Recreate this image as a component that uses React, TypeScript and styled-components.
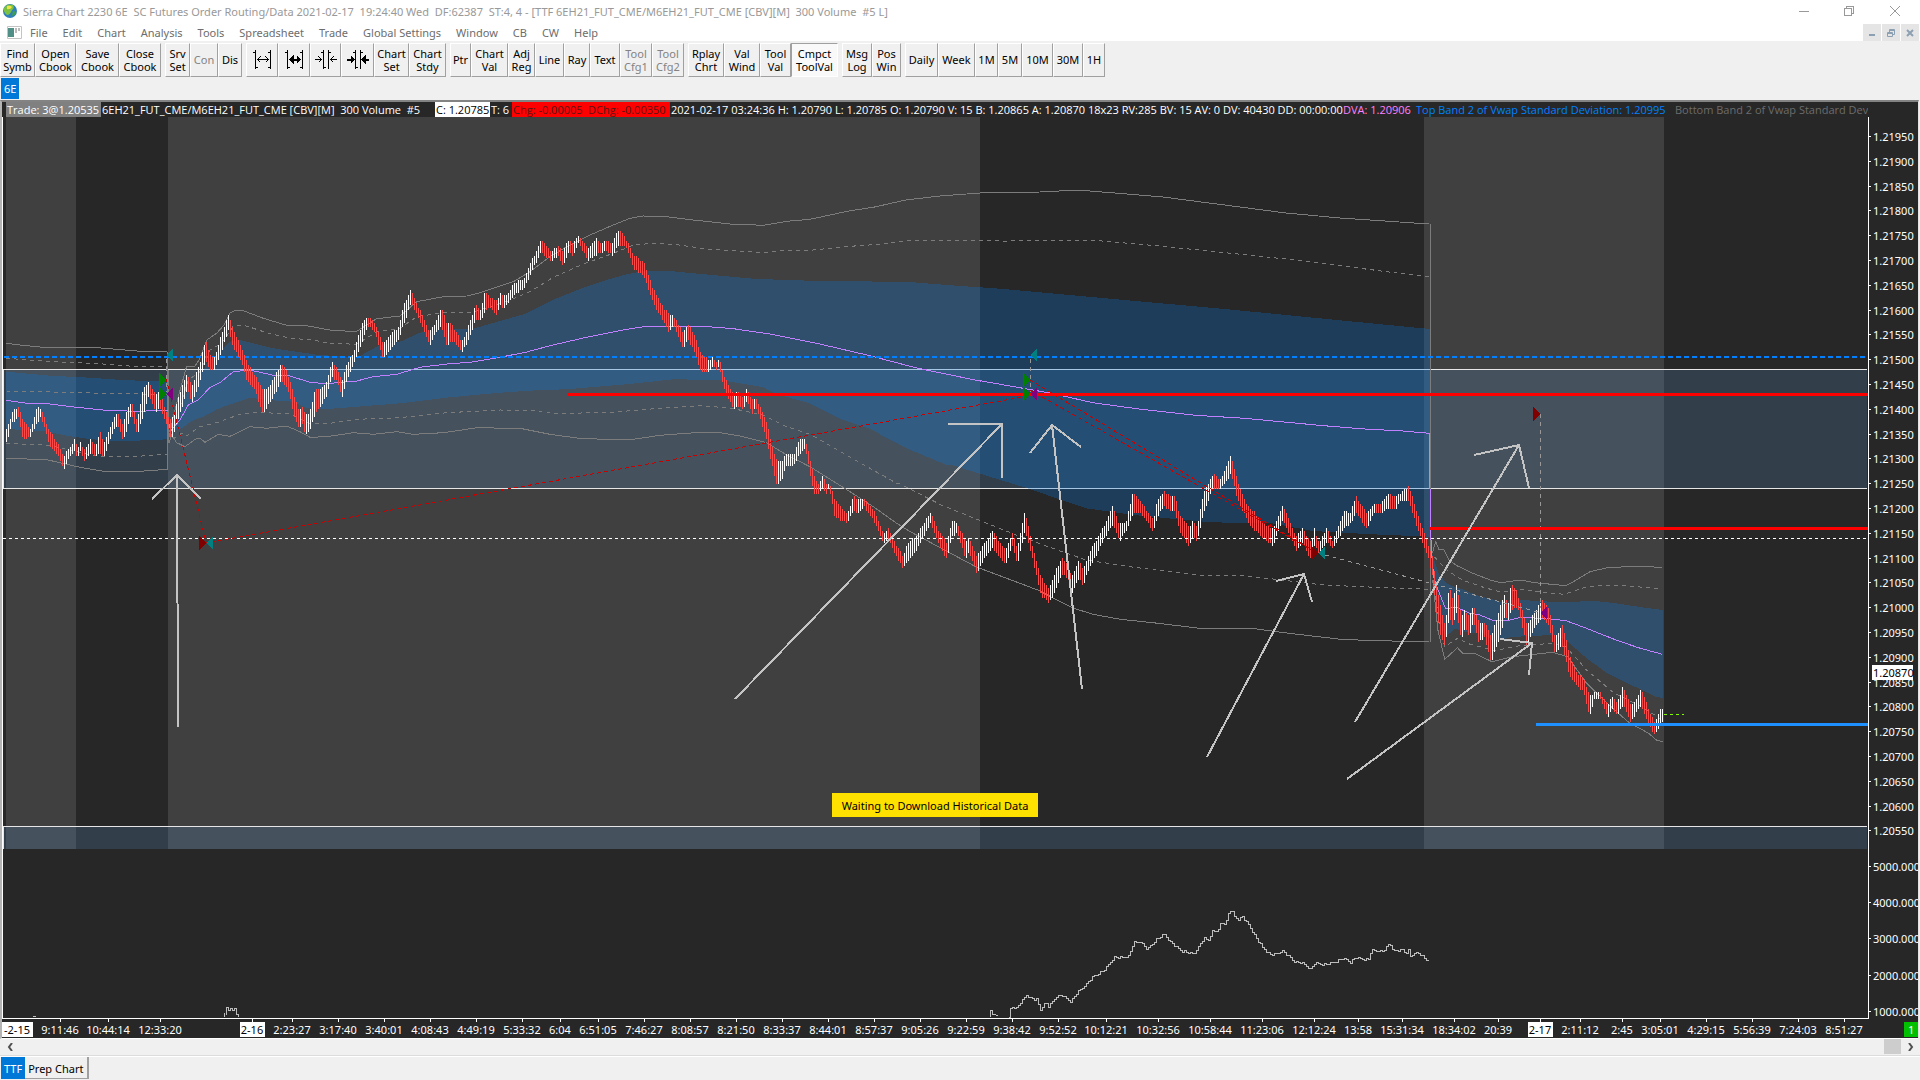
import React from "react";
import styled, { createGlobalStyle } from "styled-components";

const Global = createGlobalStyle`
  body { margin: 0; background: #f0f0f0; }
  *, *::before, *::after { box-sizing: border-box; }
  body, button { font: 11px/13px "Noto Sans", "Open Sans", sans-serif; }
`;

const Window = styled.div`
  min-height: 100vh;
  display: flex;
  flex-direction: column;
  background: #f0f0f0;
  overflow: hidden;
`;

const TitleBar = styled.header`
  display: flex;
  align-items: center;
  height: 24px;
  padding: 0 2px 2px 3px;
  background: #fff;
  color: #999;
  white-space: pre;
`;

const Title = styled.h1`
  flex: 1;
  margin: 0 0 0 6px;
  font: inherit;
`;

const CaptionButton = styled.button`
  width: 46px;
  height: 20px;
  padding: 0;
  border: 0;
  background: none;
  display: grid;
  place-items: center;
`;

const MenuBar = styled.nav`
  display: flex;
  align-items: center;
  gap: 1px;
  height: 17px;
  padding-left: 7px;
  background: #fff;
`;

const MenuItem = styled.button`
  padding: 0 7px;
  border: 0;
  background: none;
  color: #6d6d6d;
  white-space: nowrap;
`;

const MdiButtons = styled.div`
  display: flex;
  gap: 1px;
  margin-left: auto;
  padding-right: 1px;
`;

const MdiButton = styled.button`
  width: 18px;
  height: 17px;
  padding: 0;
  border: 0;
  background: #e5e5e5;
  display: grid;
  place-items: center;
`;

const Toolbar = styled.div`
  display: flex;
  gap: 4px;
  padding: 2px 0 1px;
`;

const ToolGroup = styled.div`
  display: flex;
`;

const ToolButton = styled.button<{ $w: number; $on?: boolean }>`
  width: ${(p) => p.$w}px;
  height: 34px;
  padding: 0 0 1px;
  display: grid;
  place-content: center;
  text-align: center;
  white-space: pre;
  color: #000;
  background: ${(p) => (p.$on ? "#f9f9f9" : "#f0f0f0")};
  border: 1px solid;
  border-color: ${(p) => (p.$on ? "#a0a0a0 #fff #fff #a0a0a0" : "#fff #a0a0a0 #a0a0a0 #fff")};
  &:disabled { color: #838383; }
`;

const TabRow = styled.div<{ $pad?: number }>`
  display: flex;
  height: 22px;
  padding: 0 0 ${(p) => p.$pad ?? 0}px 1px;
`;

const Tab = styled.button<{ $active?: boolean }>`
  padding: 0 ${(p) => (p.$active ? 3 : 6)}px 0 3px;
  border: 0;
  color: ${(p) => (p.$active ? "#fff" : "#000")};
  background: ${(p) => (p.$active ? "#0078d7" : "#f0f0f0")};
  box-shadow: ${(p) => (p.$active ? "none" : "inset -2px -1px #a0a0a0")};
`;

const ChartFrame = styled.main`
  position: relative;
  margin-right: 1px;
  border: solid;
  border-width: 2px 1px 1px 2px;
  border-color: #838383 #e3e3e3 #fff #b4b4b4;
  background: #272727;
`;

const InfoLine = styled.div`
  display: flex;
  align-items: center;
  height: 15px;
  margin-right: 50px;
  padding-left: 4px;
  overflow: hidden;
  white-space: pre;
  color: #fff;
  font-family: "Open Sans", "Noto Sans", sans-serif;
`;

const Info = styled.span<{ $bg?: string; $c?: string; $w?: number }>`
  flex: none;
  padding: 0 1px;
  line-height: 15px;
  width: ${(p) => (p.$w ? `${p.$w}px` : "auto")};
  background: ${(p) => p.$bg ?? "transparent"};
  color: ${(p) => p.$c ?? "#fff"};
`;

const Plot = styled.svg`
  display: block;
  width: 100%;
  height: auto;
  font: 11px "Noto Sans", "Open Sans", sans-serif;
  fill: #fff;
`;

const NoticeLayer = styled.div`
  position: absolute;
  left: 0;
  right: 50px;
  bottom: 221px;
  display: flex;
  justify-content: center;
`;

const Notice = styled.div`
  padding: 6px 10px 5px;
  background: #ffe100;
  color: #000;
`;

const ScrollBar = styled.div`
  display: flex;
  align-items: center;
  height: 18px;
  padding: 0 2px 2px 2px;
  border-bottom: 1px solid #fff;
  box-shadow: inset 0 -1px #dcdcdc;
`;

const ScrollArrow = styled.button`
  width: 17px;
  height: 15px;
  padding: 0;
  border: 0;
  background: none;
  display: grid;
  place-items: center;
`;

const ScrollTrack = styled.div`
  flex: 1;
  display: flex;
  justify-content: flex-end;
`;

const ScrollThumb = styled.div`
  width: 17px;
  height: 15px;
  background: #cdcdcd;
`;

type P = number[];

/* Samples are kept per tile: origin, horizontal units per pixel, 3 vertical units per pixel. */
const tile = (x0: number, y0: number, k: number, pts: P[]): P[] =>
  pts.map(([x, ...ys]) => [x0 + x / k, ...ys.map((y) => y0 + y / 3)]);
const t1 = (pts: P[]) => tile(0, 280, 3, pts);
const t2 = (pts: P[]) => tile(500, 200, 3, pts);
const t3 = (pts: P[]) => tile(900, 330, 2.904, pts);
const t4 = (pts: P[]) => tile(1380, 380, 2.904, pts);

/* Turning points of the price bars: x, high, low. */
const bars: P[] = [
  ...t1([
    [20, 450, 483], [35, 396, 430], [53, 380, 408], [68, 420, 482], [92, 450, 466], [110, 382, 432], [122, 386, 408],
    [145, 450, 490], [170, 485, 522], [190, 530, 572], [205, 506, 538], [223, 478, 512], [232, 505, 538], [240, 488, 512],
    [253, 512, 544], [272, 476, 520], [285, 500, 536], [298, 452, 520], [310, 487, 538], [335, 425, 462], [352, 396, 432],
    [368, 435, 484], [382, 380, 440], [394, 366, 400], [410, 425, 464], [428, 325, 410], [445, 306, 350], [465, 345, 397],
    [477, 335, 384], [500, 400, 437], [512, 425, 478], [530, 365, 430], [548, 310, 372], [560, 282, 327], [575, 315, 372],
    [600, 245, 300], [615, 178, 240], [627, 222, 268], [642, 235, 268], [655, 190, 238], [672, 140, 190], [685, 104, 150],
    [697, 145, 200], [725, 205, 250], [738, 240, 297], [760, 280, 322], [788, 330, 402], [800, 325, 382], [820, 295, 350],
    [842, 252, 302], [860, 275, 322], [885, 360, 420], [897, 395, 448], [905, 380, 432], [915, 402, 462], [928, 400, 452],
    [945, 325, 397], [958, 335, 387], [980, 300, 347], [995, 246, 290], [1010, 265, 302], [1025, 300, 352], [1040, 250, 302],
    [1060, 215, 252], [1088, 120, 180], [1100, 110, 142], [1120, 120, 150], [1148, 190, 237], [1170, 165, 208], [1195, 140, 180],
    [1210, 75, 132], [1232, 30, 72], [1250, 70, 102], [1275, 130, 167], [1288, 155, 197], [1310, 120, 152], [1322, 80, 137],
    [1340, 130, 200], [1348, 120, 190], [1362, 150, 186], [1385, 185, 217], [1400, 150, 192], [1425, 75, 122], [1440, 88, 122],
    [1455, 30, 92], [1468, 50, 80], [1490, 65, 107],
  ]),
  ...t2([
    [2, 270, 307], [8, 290, 332], [20, 287, 315], [40, 250, 287], [72, 235, 265], [95, 180, 215], [122, 120, 155], [150, 155, 182],
    [175, 135, 167], [187, 155, 197], [207, 115, 155], [218, 130, 167], [235, 105, 125], [262, 145, 182], [290, 115, 162],
    [302, 130, 160], [318, 120, 150], [335, 130, 167], [357, 84, 132], [378, 120, 142], [400, 165, 207], [430, 185, 227],
    [457, 265, 307], [490, 325, 367], [505, 340, 397], [520, 345, 377], [548, 400, 450], [563, 375, 420], [580, 400, 450],
    [603, 465, 517], [625, 480, 517], [637, 470, 500], [648, 485, 508], [657, 478, 502], [672, 530, 572], [700, 585, 628],
    [712, 575, 615], [728, 592, 630], [740, 567, 602], [755, 600, 643], [767, 597, 622], [795, 655, 702], [827, 780, 854],
    [845, 785, 837], [855, 762, 802], [880, 765, 797], [897, 715, 767], [915, 717, 747], [940, 825, 880], [955, 855, 882],
    [967, 828, 867], [978, 850, 882], [987, 848, 862], [1003, 895, 950], [1040, 945, 970], [1060, 888, 932], [1072, 895, 947],
    [1090, 893, 917], [1125, 940, 972], [1150, 1000, 1030], [1165, 985, 1022], [1180, 1020, 1052],
  ]),
  ...t3([
    [8, 680, 717], [20, 640, 692], [45, 620, 662], [88, 548, 582], [110, 600, 642], [135, 640, 687], [150, 573, 622],
    [165, 578, 607], [190, 635, 687], [200, 625, 667], [222, 680, 730], [240, 645, 692], [268, 603, 652], [305, 660, 707],
    [325, 608, 647], [340, 655, 702], [362, 543, 602], [385, 655, 692], [408, 740, 797], [432, 780, 820], [450, 725, 782],
    [467, 683, 737], [485, 705, 742], [497, 740, 792], [518, 690, 747], [530, 715, 767], [550, 665, 712], [590, 590, 632],
    [617, 528, 582], [635, 585, 634], [655, 575, 607], [675, 488, 552], [700, 518, 552], [735, 570, 607], [745, 510, 562],
    [765, 483, 527], [785, 500, 542], [797, 498, 542], [810, 550, 602], [838, 590, 650], [850, 573, 622], [862, 590, 634],
    [880, 488, 552], [908, 432, 472], [930, 448, 477], [960, 376, 432], [980, 455, 512], [1010, 530, 577], [1030, 548, 602],
    [1050, 580, 622], [1082, 595, 647], [1110, 526, 572], [1150, 620, 662], [1168, 595, 637], [1193, 640, 692], [1203, 595, 647],
    [1215, 640, 672], [1238, 595, 637], [1255, 630, 657], [1290, 545, 592], [1308, 548, 580], [1322, 498, 547], [1355, 550, 597],
    [1375, 518, 547], [1398, 518, 550], [1418, 488, 532], [1438, 503, 537], [1450, 490, 512], [1477, 466, 517], [1500, 550, 592],
    [1530, 630, 675],
  ]),
  ...t4([
    [135, 485, 520], [150, 520, 580], [160, 600, 680], [175, 680, 770], [188, 740, 802], [200, 615, 712], [210, 655, 737],
    [222, 608, 692], [235, 710, 787], [245, 690, 742], [258, 710, 767], [270, 673, 722], [285, 725, 787], [303, 725, 772],
    [322, 770, 847], [350, 670, 762], [362, 645, 707], [370, 680, 725], [380, 608, 692], [398, 640, 677], [425, 735, 797],
    [440, 710, 757], [470, 658, 712], [490, 690, 737], [507, 770, 827], [520, 750, 802], [530, 735, 802], [550, 830, 892],
    [570, 880, 917], [590, 890, 932], [607, 950, 1012], [620, 935, 962], [637, 935, 957], [660, 975, 1012], [675, 948, 982],
    [688, 970, 1012], [705, 918, 972], [728, 980, 1027], [740, 965, 1002], [757, 925, 982], [780, 990, 1037], [797, 1030, 1063],
    [815, 985, 1032], [822, 993, 1018],
  ]),
];

const sample = (pts: P[], x: number): P => {
  let i = 1;
  while (i < pts.length - 1 && pts[i][0] < x) i++;
  const a = pts[i - 1];
  const b = pts[i];
  const t = Math.min(1, Math.max(0, (x - a[0]) / (b[0] - a[0] || 1)));
  return a.map((v, n) => v + (b[n] - v) * t);
};

/* One price tick is 2.48 units high; highs and lows sit on whole ticks. */
const tick = (y: number, round: (v: number) => number) => Math.round(round((y - 136.5) / 2.48) * 2.48 + 136.5);

const barPaths = () => {
  const out = { up: "", down: "" };
  for (let x = 6; x <= 1662; x += 2) {
    const [, top, bottom] = sample(bars, x);
    const before = sample(bars, x - 1);
    const after = sample(bars, x + 1);
    const hi = tick(top, Math.round);
    const lo = tick(bottom, Math.round);
    const key = after[1] + after[2] < before[1] + before[2] ? "up" : "down";
    out[key] += `M${x + 0.5} ${hi}V${lo}`;
  }
  return out;
};

const line = (pts: P[]) => "M" + pts.map(([x, y]) => `${x.toFixed(1)} ${y.toFixed(1)}`).join("L");
const area = (top: P[], bottom: P[]) => line([...top, ...[...bottom].reverse()]) + "Z";

const s1 = {
  top2: t1([[18, 190], [60, 195], [130, 202], [290, 203], [350, 208], [420, 214], [500, 216]]),
  top15: t1([[18, 235], [90, 240], [200, 247], [280, 250], [400, 259], [500, 260]]),
  top1: t1([[18, 275], [150, 287], [270, 293], [380, 301], [500, 304]]),
  mid: t1([[18, 333], [200, 337], [350, 341], [500, 343]]),
  vwap: t1([[18, 361], [80, 370], [150, 372], [230, 382], [330, 392], [430, 394], [460, 391], [503, 391]]),
  bot1: t1([[18, 447], [130, 453], [200, 467], [270, 477], [340, 484], [440, 481], [503, 478]]),
  bot15: t1([[18, 490], [150, 496], [230, 515], [290, 528], [400, 530], [503, 522]]),
  bot2: t1([[18, 535], [140, 539], [180, 548], [240, 562], [310, 574], [420, 574], [503, 568]]),
};

const s2 = {
  top2: [
    ...t1([[508, 470], [520, 410], [535, 350], [560, 258], [585, 258], [600, 235], [620, 180], [650, 160], [672, 135], [690, 98], [710, 90],
      [730, 92], [790, 115], [860, 136], [920, 137], [1000, 152], [1070, 154], [1130, 116], [1200, 108], [1250, 65], [1330, 50],
      [1400, 48], [1440, 38], [1500, 18]]),
    ...t2([[40, 245], [90, 215], [150, 170], [200, 140], [270, 105], [340, 75], [390, 55], [430, 48], [490, 49], [580, 60], [690, 72],
      [790, 76], [860, 64], [930, 58], [1050, 32], [1120, 22], [1217, 0]]),
    [940, 196], [980, 193], [1040, 192], [1078, 190], [1163, 197], [1286, 213], [1340, 218], [1429, 224],
  ],
  top15: [
    ...t1([[540, 380], [565, 300], [600, 275], [630, 210], [665, 190], [700, 138], [730, 135], [800, 158], [870, 175], [940, 180],
      [990, 190], [1070, 193], [1130, 155], [1200, 145], [1250, 110], [1330, 98], [1420, 97], [1500, 70]]),
    ...t2([[20, 305], [90, 275], [160, 232], [250, 192], [340, 160], [400, 135], [460, 130], [530, 134], [620, 147], [760, 156],
      [800, 157], [860, 151], [930, 151], [1050, 139], [1140, 133], [1230, 121], [1500, 123]]),
    [1010, 241], [1090, 240], [1160, 246], [1286, 259], [1429, 277],
  ],
  top1: [
    ...t1([[508, 455], [530, 400], [560, 340], [590, 310], [620, 250], [650, 225], [690, 185], [720, 180], [820, 205], [950, 224],
      [1070, 233], [1140, 195], [1200, 185], [1260, 158], [1320, 150], [1420, 146], [1500, 123]]),
    ...t2([[80, 340], [170, 295], [240, 267], [320, 240], [380, 223], [430, 213], [510, 213], [570, 219], [680, 229], [770, 237],
      [930, 242], [1230, 246], [1340, 255], [1500, 266]]),
    [1102, 298], [1225, 309], [1347, 321], [1430, 329],
  ],
  vwap: [
    ...t1([[505, 425], [512, 452], [540, 420], [565, 375], [595, 360], [630, 322], [660, 308], [700, 275], [750, 270], [820, 286],
      [870, 288], [930, 307], [980, 311], [1070, 303], [1120, 290], [1190, 283], [1260, 262], [1340, 252], [1410, 247], [1500, 232]]),
    ...t2([[80, 456], [150, 437], [250, 414], [380, 388], [440, 379], [610, 379], [700, 386], [810, 402], [950, 430], [1110, 467],
      [1250, 504], [1440, 543]]),
    ...t3([[232, 152], [440, 190], [560, 218], [700, 238], [860, 256], [1000, 265], [1230, 287], [1360, 298], [1450, 302], [1537, 310], [1538, 400],
      [1541, 590], [1543, 660], [1550, 740]]),
    ...t4([[165, 620], [190, 685], [225, 683], [260, 700], [290, 705], [330, 722], [370, 722], [410, 712], [490, 716], [540, 722],
      [600, 745], [680, 778], [750, 803], [820, 823]]),
  ],
  bot1: [
    ...t1([[508, 455], [545, 445], [580, 420], [610, 410], [650, 388], [700, 370], [750, 353], [800, 360], [880, 365], [920, 385],
      [970, 388], [1050, 382], [1200, 370], [1350, 352], [1500, 338]]),
    ...t2([[120, 570], [200, 568], [380, 553], [520, 538], [660, 540], [790, 562], [830, 583], [930, 610], [1030, 660], [1110, 687],
      [1220, 745], [1340, 795]]),
    ...t3([[150, 405], [370, 475], [540, 535], [680, 555], [900, 577], [1080, 580], [1200, 603], [1370, 613], [1540, 620]]),
  ],
  bot15: [
    ...t1([[508, 450], [520, 475], [545, 460], [560, 467], [600, 440], [650, 428], [720, 403], [770, 397], [870, 402], [930, 430],
      [990, 430], [1070, 418], [1200, 413], [1340, 398], [1500, 390]]),
    ...t2([[100, 631], [170, 640], [320, 638], [480, 625], [600, 617], [690, 624], [790, 645], [860, 680], [930, 703], [1030, 760],
      [1190, 850]]),
    ...t3([[0, 462], [120, 525], [330, 612], [430, 650], [540, 690], [680, 712], [860, 735], [1000, 737], [1230, 765], [1380, 772], [1537, 778]]),
  ],
  bot2: [
    ...t1([[505, 270], [506, 490], [515, 465], [530, 488], [555, 500], [590, 475], [600, 475], [615, 487], [655, 463], [690, 469], [750, 440],
      [800, 445], [860, 438], [900, 455], [930, 472], [980, 470], [1060, 458], [1120, 463], [1190, 455], [1240, 463], [1330, 458],
      [1440, 442], [1500, 445]]),
    ...t2([[60, 685], [150, 703], [230, 714], [310, 718], [400, 718], [480, 706], [600, 697], [660, 698], [720, 708], [800, 728],
      [860, 765], [930, 800], [1050, 875], [1120, 920], [1190, 970]]),
    ...t3([[30, 605], [120, 655], [220, 710], [400, 780], [500, 833], [560, 853], [640, 868], [750, 880], [870, 895], [1020, 895],
      [1130, 910], [1280, 928], [1380, 932], [1537, 935]]),
  ],
};

const s3 = {
  top2: t4([[152, 520], [157, 500], [162, 485], [172, 510], [185, 508], [200, 540], [225, 558], [270, 580], [320, 600], [350, 608],
    [410, 600], [450, 608], [540, 617], [570, 600], [610, 575], [660, 563], [740, 559], [820, 562]]),
  top15: t4([[158, 530], [175, 550], [200, 575], [240, 600], [300, 622], [350, 636], [410, 628], [470, 637], [535, 643], [600, 620],
    [680, 615], [820, 626]]),
  top1: t4([[148, 510], [170, 580], [195, 612], [240, 628], [280, 645], [350, 665], [400, 658], [450, 663], [540, 667], [620, 662],
    [700, 672], [760, 682], [822, 690]]),
  bot1: t4([[148, 520], [165, 650], [175, 720], [190, 770], [220, 745], [245, 757], [300, 760], [330, 785], [380, 772], [430, 768],
    [510, 765], [545, 785], [600, 835], [660, 880], [720, 910], [760, 930], [800, 950], [822, 954]]),
  bot15: t4([[155, 600], [172, 730], [188, 800], [225, 775], [260, 792], [335, 812], [400, 798], [500, 790], [540, 800], [600, 870],
    [680, 940], [760, 980], [820, 1020]]),
  bot2: t4([[153, 600], [168, 750], [188, 838], [225, 803], [240, 820], [275, 820], [325, 845], [385, 830], [500, 817], [545, 830],
    [600, 910], [660, 970], [720, 1025], [780, 1060], [805, 1082], [822, 1084]]),
};

const volume = tile(960, 860, 3, [
  [145, 470], [146, 452], [152, 440], [170, 442], [178, 430], [188, 418], [198, 405], [215, 415], [228, 418], [240, 448], [255, 425],
  [265, 440], [285, 410], [303, 404], [330, 422], [350, 398], [400, 348], [430, 330], [462, 290], [485, 293], [503, 288], [520, 248],
  [540, 242], [560, 268], [590, 235], [613, 222], [630, 245], [660, 270], [700, 280], [730, 235], [745, 238], [755, 213], [775, 210],
  [780, 190], [797, 187], [803, 160], [813, 148], [822, 170], [836, 178], [845, 168], [862, 190], [885, 230], [905, 260], [925, 280],
  [945, 283], [965, 270], [1000, 302], [1035, 313], [1052, 328], [1060, 310], [1100, 312], [1150, 295], [1170, 305], [1185, 293],
  [1225, 298], [1232, 270], [1270, 272], [1287, 250], [1300, 272], [1325, 268], [1335, 278], [1345, 268], [1350, 288], [1372, 275],
  [1408, 307],
]);

const stepped = (pts: P[], from: number, to: number) => {
  let d = `M${from + 0.5} ${Math.round(sample(pts, from)[1]) + 0.5}`;
  for (let x = from + 2; x <= to; x += 2) {
    const wobble = ((x * 29) % 7) / 3 - 1;
    d += `H${x + 0.5}V${Math.round(sample(pts, x)[1] + wobble) + 0.5}`;
  }
  return d;
};

const sessions: [number, number, string][] = [
  [6, 70, "#404040"], [168, 812, "#404040"], [1424, 240, "#404040"],
];

const arrows: [P, P, P, P][] = [
  [[178, 727], [177, 475], [152, 499], [201, 499]],
  [[735, 699], [1002, 424], [948, 424], [1002, 478]],
  [[1082, 689], [1052, 425], [1030, 453], [1081, 447]],
  [[1207, 757], [1304, 574], [1276, 581], [1312, 602]],
  [[1355, 722], [1519, 445], [1474, 455], [1529, 488]],
  [[1347, 779], [1532, 643], [1500, 639], [1529, 675]],
];

/* Trade markers: x of the fill, y, direction (1 points right), colour. */
const markers: [number, number, number, string][] = [
  [166, 380, 1, "#008000"], [166, 394, 1, "#008000"], [166, 355, -1, "#008080"], [166, 394, -1, "#800080"],
  [206, 543, 1, "#800000"], [206, 543, -1, "#008080"],
  [1030, 380, 1, "#008000"], [1030, 394, 1, "#008000"], [1030, 355, -1, "#008080"], [1030, 394, -1, "#800080"],
  [1318, 553, 1, "#800000"], [1318, 553, -1, "#008080"],
  [1540, 414, 1, "#800000"], [1540, 613, -1, "#800080"],
];

const times: [number, string, boolean?][] = [
  [60, "9:11:46"], [108, "10:44:14"], [160, "12:33:20"], [252, "2-16", true], [292, "2:23:27"], [338, "3:17:40"],
  [384, "3:40:01"], [430, "4:08:43"], [476, "4:49:19"], [522, "5:33:32"], [560, "6:04"], [598, "6:51:05"], [644, "7:46:27"],
  [690, "8:08:57"], [736, "8:21:50"], [782, "8:33:37"], [828, "8:44:01"], [874, "8:57:37"], [920, "9:05:26"], [966, "9:22:59"],
  [1012, "9:38:42"], [1058, "9:52:52"], [1106, "10:12:21"], [1158, "10:32:56"], [1210, "10:58:44"], [1262, "11:23:06"],
  [1314, "12:12:24"], [1358, "13:58"], [1402, "15:31:34"], [1454, "18:34:02"], [1498, "20:39"], [1540, "2-17", true],
  [1580, "2:11:12"], [1622, "2:45"], [1660, "3:05:01"], [1706, "4:29:15"], [1752, "5:56:39"], [1798, "7:24:03"], [1844, "8:51:27"],
];

const prices = Array.from({ length: 29 }, (_, i) => ({
  y: Math.round(136 + i * 24.8),
  label: (1.2195 - i * 0.0005).toFixed(5),
}));

const studies = [866, 902, 938, 975, 1011].map((y, i) => ({ y, label: `${5 - i}000.000` }));

const Chart = () => {
  const { up, down } = barPaths();
  const solid = [s1.top2, s1.bot2, s2.top2, s2.bot2, s3.top2, s3.bot2];
  const dashed = [s1.top15, s1.mid, s1.bot15, s2.top15, s2.bot15, s3.top15, s3.bot15];
  return (
    <Plot viewBox="2 117 1916 921" role="img" aria-label="Price chart" shapeRendering="crispEdges">
      <rect x="2" y="117" width="1916" height="921" fill="#272727" />
      {sessions.map(([x, w, c]) => (
        <rect key={x} x={x} y="117" width={w} height="732" fill={c} />
      ))}
      <rect x="3" y="369" width="1864" height="120" fill="rgba(89,143,193,.24)" />
      <rect x="3" y="827" width="1864" height="22" fill="rgba(89,143,193,.24)" />
      <path d="M1867 369.500H3.500V488.500H1867M3.500 849V826.500H1867" fill="none" stroke="#e6e6e6" />
      {[area(s1.top1, s1.bot1), area(s2.top1, s2.bot1), area(s3.top1, s3.bot1)].map((d) => (
        <path key={d} d={d} fill="rgba(2,118,228,.28)" />
      ))}
      <g fill="none" stroke="#7c7c7c">
        {solid.map((p, i) => <path key={i} d={line(p)} />)}
        {dashed.map((p, i) => <path key={i} d={line(p)} strokeDasharray="4 4" />)}
        <path d="M167.500 352V469M1430.500 224V642" />
      </g>
      <g fill="none" stroke="#c080ff">
        <path d={line(s1.vwap)} />
        <path d={line(s2.vwap)} />
      </g>
      <path d="M4 357H1868" stroke="#0080ff" strokeWidth="2" strokeDasharray="5 3" />
      <path d={up} stroke="#fff" />
      <path d={down} stroke="#f84848" />
      <path d="M3 538.500H1868" stroke="#fff" strokeDasharray="3 3" />
      <path d="M1664 714.500H1684" stroke="#7fff00" strokeDasharray="3 3" />
      <g fill="none" stroke="#c80000" strokeDasharray="4 3">
        <path d="M166 378L177 423L193 488L206 543L1023 397M1030 380L1317 553M1030 390L1317 553" />
      </g>
      <g fill="none" stroke="#989898" strokeDasharray="4 4">
        <path d="M1325 555L1538 612M1540.500 414V608M1030.500 359V392M166.500 359V392" />
      </g>
      <path d="M568 394.500H1868M1430 528.500H1868" stroke="#f00" strokeWidth="3" />
      <path d="M1536 724.500H1868" stroke="#1e90ff" strokeWidth="3" />
      {markers.map(([x, y, dir, c], i) => (
        <path key={i} d={`M${x} ${y}l${-7 * dir} -7v14z`} fill={c} />
      ))}
      <g fill="none" stroke="#c4c4c4" strokeWidth="2">
        {arrows.map(([tail, tip, a, b], i) => (
          <path key={i} d={line([tail, tip]) + line([a, tip, b])} />
        ))}
      </g>
      <g fill="none" stroke="#bdbdbd">
        <path d={stepped(volume, 1008, 1428)} />
        <path d="M224.500 1017V1013M226.500 1015V1007.500H228.500V1010.500H230.500V1008.500H232.500V1010.500H234.500V1008.500H236.500V1014.500H238.500V1017M33 1016.500H36M990.500 1017V1010.500H992.500V1014.500H994.500L998 1015.500" />
      </g>
      <path d="M2.500 117V1018.500H1868.500V117" fill="none" stroke="#fff" />
      <g stroke="#fff">
        {[...prices, ...studies].map(({ y, label }) => (
          <path key={label} d={`M1868 ${y + 0.5}h3`} />
        ))}
        {times.map(([x, label]) => <path key={label} d={`M${x + 0.5} 1018v4`} />)}
      </g>
      {[...prices, ...studies].map(({ y, label }) => (
        <text key={label} x="1873" y={y + 5}>{label}</text>
      ))}
      <rect x="1872" y="665" width="41" height="15" fill="#fff" />
      <text x="1873" y="677" fill="#000">1.20870</text>
      <rect x="2" y="1022" width="31" height="15" fill="#fff" />
      <text x="4" y="1034" fill="#000">-2-15</text>
      {times.map(([x, label, day]) => (
        <g key={label} textAnchor="middle">
          {day && <rect x={x - 12} y="1022" width="25" height="15" fill="#fff" />}
          <text x={x} y="1034" fill={day ? "#000" : "#fff"}>{label}</text>
        </g>
      ))}
      <rect x="1904" y="1022" width="14" height="15" fill="#00c000" />
      <text x="1908" y="1034">1</text>
    </Plot>
  );
};

const SpacingIcon = ({ kind }: { kind: number }) => {
  const head = kind % 2 ? 3 : 2;
  const out = kind < 2;
  return (
    <svg width="22" height="24" viewBox="0 0 22 24" fill="none" stroke="#000" shapeRendering="crispEdges" aria-hidden="true">
      {out ? (
        <>
          <path d="M4.500 2V21M2 4.500H4M5 19.500H7M19.500 2V21M17 4.500H19M17 19.500H19" />
          <path d="M7 11.500H17" strokeWidth={head - 1} />
          <path d={kind ? "M7 11.500l3 -3v6zM17 11.500l-3 -3v6z" : "M9.500 8.500l-3 3l3 3M14.500 8.500l3 3l-3 3"} fill={kind ? "#000" : "none"} />
        </>
      ) : (
        <>
          <path d="M8.500 2V21M6 4.500H8M9 19.500H11M13.500 2V21M14 4.500H16" />
          <path d="M0 11.500H6M16 11.500H22" strokeWidth={head - 1} />
          <path d={kind === 3 ? "M7 11.500l-3 -3v6zM15 11.500l3 -3v6z" : "M3.500 8.500l3 3l-3 3M18.500 8.500l-3 3l3 3"} fill={kind === 3 ? "#000" : "none"} />
        </>
      )}
    </svg>
  );
};

type Tool = { label: string; w: number; off?: boolean; on?: boolean; icon?: number };
const groups: Tool[][] = [
  [{ label: "Find\nSymb", w: 35 }, { label: "Open\nCbook", w: 41 }, { label: "Save\nCbook", w: 43 }, { label: "Close\nCbook", w: 42 }],
  [{ label: "Srv\nSet", w: 25 }, { label: "Con", w: 28, off: true }, { label: "Dis", w: 24 }],
  [
    { label: "Increase spacing", w: 32, icon: 0 }, { label: "Increase spacing more", w: 32, icon: 1 },
    { label: "Decrease spacing", w: 31, icon: 2 }, { label: "Decrease spacing more", w: 33, icon: 3 },
    { label: "Chart\nSet", w: 35 }, { label: "Chart\nStdy", w: 37 },
  ],
  [
    { label: "Ptr", w: 21 }, { label: "Chart\nVal", w: 37 }, { label: "Adj\nReg", w: 27 }, { label: "Line", w: 29 },
    { label: "Ray", w: 26 }, { label: "Text", w: 30 }, { label: "Tool\nCfg1", w: 32, off: true }, { label: "Tool\nCfg2", w: 32, off: true },
  ],
  [{ label: "Rplay\nChrt", w: 36 }, { label: "Val\nWind", w: 36 }, { label: "Tool\nVal", w: 31 }, { label: "Cmpct\nToolVal", w: 47, on: true }],
  [{ label: "Msg\nLog", w: 30 }, { label: "Pos\nWin", w: 29 }],
  [
    { label: "Daily", w: 33 }, { label: "Week", w: 37 }, { label: "1M", w: 23 }, { label: "5M", w: 24 },
    { label: "10M", w: 31 }, { label: "30M", w: 30 }, { label: "1H", w: 22 },
  ],
];

const menus = ["File", "Edit", "Chart", "Analysis", "Tools", "Spreadsheet", "Trade", "Global Settings", "Window", "CB", "CW", "Help"];

export default function App() {
  return (
    <Window>
      <Global />
      <TitleBar>
        <svg width="14" height="16" viewBox="0 0 14 16" aria-hidden="true">
          <ellipse cx="7" cy="8" rx="7" ry="7" fill="#2f7fb8" />
          <path d="M1 5Q4 0 10 2Q12 5 9 7Q7 12 4 12Q0 9 1 5Z" fill="#7cc142" />
          <path d="M4 3Q7 2 9 4Q7 7 4 6Z" fill="#f2e24a" />
          <path d="M10 8Q13 8 13 10Q11 13 9 13Z" fill="#3fa04a" />
        </svg>
        <Title>{"Sierra Chart 2230 6E  SC Futures Order Routing/Data 2021-02-17  19:24:40 Wed  DF:62387  ST:4, 4 - [TTF 6EH21_FUT_CME/M6EH21_FUT_CME [CBV][M]  300 Volume  #5 L]"}</Title>
        <CaptionButton aria-label="Minimize"><svg width="11" height="11" stroke="#999" shapeRendering="crispEdges"><path d="M1 5.500H11" /></svg></CaptionButton>
        <CaptionButton aria-label="Restore"><svg width="11" height="11" fill="none" stroke="#999" shapeRendering="crispEdges"><path d="M.5 2.500H7.500V9.500H.5ZM2.500 2V.5H9.500V7.500H8" /></svg></CaptionButton>
        <CaptionButton aria-label="Close"><svg width="11" height="11" stroke="#999"><path d="M0 0L10 10M10 0L0 10" /></svg></CaptionButton>
      </TitleBar>
      <MenuBar>
        <svg width="15" height="13" viewBox="0 0 15 13" aria-hidden="true">
          <path d="M.5 .5H14.500V12.500H.5Z" fill="#fff" stroke="#c4c4c4" />
          <path d="M1 2H7V11H1Z" fill="#4f8f86" />
          <path d="M9 2V7M12 2V5" stroke="#777" />
        </svg>
        {menus.map((m) => <MenuItem key={m}>{m}</MenuItem>)}
        <MdiButtons>
          <MdiButton aria-label="Minimize chart"><svg width="8" height="8" fill="#8ca0b3"><path d="M1 5H7V7H1Z" /></svg></MdiButton>
          <MdiButton aria-label="Restore chart"><svg width="8" height="8" fill="none" stroke="#8ca0b3"><path d="M.5 3.500H5.500V7.500H.5ZM0 4.500H5M2.500 3V.5H7.500V5.500H6M2 1.500H8" /></svg></MdiButton>
          <MdiButton aria-label="Close chart"><svg width="8" height="8" stroke="#8ca0b3" strokeWidth="2"><path d="M1 1L7 7M7 1L1 7" /></svg></MdiButton>
        </MdiButtons>
      </MenuBar>
      <Toolbar>
        {groups.map((g, i) => (
          <ToolGroup key={i}>
            {g.map((t) => (
              <ToolButton key={t.label} $w={t.w} $on={t.on} disabled={t.off} aria-pressed={t.on} aria-label={t.icon === undefined ? undefined : t.label}>
                {t.icon === undefined ? t.label : <SpacingIcon kind={t.icon} />}
              </ToolButton>
            ))}
          </ToolGroup>
        ))}
      </Toolbar>
      <TabRow $pad={1}><Tab $active>6E</Tab></TabRow>
      <ChartFrame>
        <InfoLine>
          <Info $bg="#808080" $w={95}>Trade: 3@1.20535</Info>
          <Info $w={334}>{"6EH21_FUT_CME/M6EH21_FUT_CME [CBV][M]  300 Volume  #5"}</Info>
          <Info $bg="#fff" $c="#000" $w={55}>C: 1.20785</Info>
          <Info $w={22}>T: 6</Info>
          <Info $bg="#f00" $c="#5a1414" $w={75}>Chg: -0.00005</Info>
          <Info $bg="#f00" $c="#5a1414" $w={83}>DChg: -0.00350</Info>
          <Info $w={672}>2021-02-17 03:24:36 H: 1.20790 L: 1.20785 O: 1.20790 V: 15 B: 1.20865 A: 1.20870 18x23 RV:285 BV: 15 AV: 0 DV: 40430 DD: 00:00:00</Info>
          <Info $c="#ff80ff" $w={73}>DVA: 1.20906</Info>
          <Info $c="#0080ff" $w={259}>Top Band 2 of Vwap Standard Deviation: 1.20995</Info>
          <Info $c="#6c6c6c">Bottom Band 2 of Vwap Standard Deviation: 1.20754</Info>
        </InfoLine>
        <Chart />
        <NoticeLayer><Notice role="status">Waiting to Download Historical Data</Notice></NoticeLayer>
      </ChartFrame>
      <ScrollBar>
        <ScrollArrow aria-label="Scroll left"><svg width="8" height="8" fill="none" stroke="#505050" strokeWidth="2"><path d="M5 0L2 4L5 8" /></svg></ScrollArrow>
        <ScrollTrack><ScrollThumb /></ScrollTrack>
        <ScrollArrow aria-label="Scroll right"><svg width="8" height="8" fill="none" stroke="#505050" strokeWidth="2"><path d="M3 0L6 4L3 8" /></svg></ScrollArrow>
      </ScrollBar>
      <TabRow>
        <Tab $active>TTF</Tab>
        <Tab>Prep Chart</Tab>
      </TabRow>
    </Window>
  );
}
